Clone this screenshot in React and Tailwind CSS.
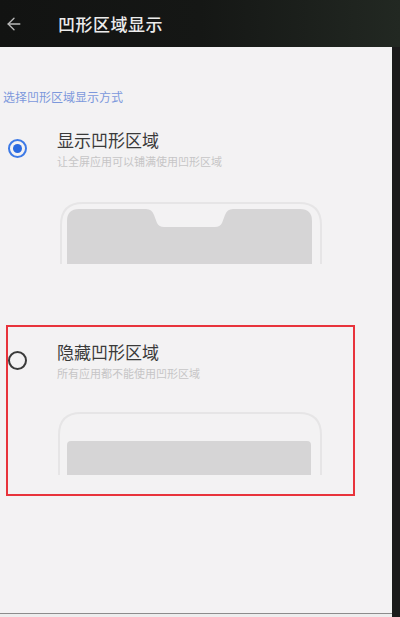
import { ArrowLeft } from "lucide-react";

// Small phone outline with a notch cut into the screen
function NotchPhone() {
  return (
    <svg width="262" height="62" viewBox="0 0 262 62" className="block">
      <path d="M1,62 L1,23 Q1,1 23,1 L239,1 Q261,1 261,23 L261,62" fill="none" stroke="#e6e5e6" strokeWidth="2" />
      <path
        d="M7,19 Q7,7 19,7 L86,7 Q92,7 94,13 L97,21 Q99,25 104,25 L155,25 Q160,25 162,21 L165,13 Q167,7 173,7 L240,7 Q252,7 252,19 L252,62 L7,62 Z"
        fill="#d6d5d6"
      />
    </svg>
  );
}

// Phone outline where the notch strip is blacked out (shown as a plain bar)
function FlatPhone() {
  return (
    <svg width="264" height="63" viewBox="0 0 264 63" className="block">
      <path d="M1,63 L1,23 Q1,1 23,1 L241,1 Q263,1 263,23 L263,63" fill="none" stroke="#e6e5e6" strokeWidth="2" />
      <path d="M9,33 Q9,29 13,29 L249,29 Q253,29 253,33 L253,63 L9,63 Z" fill="#d6d5d6" />
    </svg>
  );
}

function Radio({ checked }) {
  if (checked) {
    return (
      <div className="w-[19px] h-[19px] rounded-full border-2 border-[#3d7ae6] flex items-center justify-center">
        <div className="w-[9px] h-[9px] rounded-full bg-[#2a6ae0]" />
      </div>
    );
  }
  return <div className="w-[19px] h-[19px] rounded-full border-2 border-[#3a3a3a]" />;
}

function Option({ checked, title, desc, children }) {
  return (
    <div className="flex">
      <div className="w-[57px] pl-[8px] pt-[10px] shrink-0">
        <Radio checked={checked} />
      </div>
      <div className="flex flex-col">
        <div className="text-[17px] leading-[22px] text-[#3a3a3a]">{title}</div>
        <div className="mt-[3px] text-[11px] leading-[14px] text-[#c6c5c6]">{desc}</div>
        {children}
      </div>
    </div>
  );
}

export default function App() {
  return (
    <div
      className="w-[400px] h-[617px] bg-[#151615] flex flex-col overflow-hidden"
      style={{ fontFamily: '"Noto Sans CJK SC", "Noto Sans", sans-serif' }}
    >
      <header className="h-[47px] shrink-0 flex items-center bg-gradient-to-r from-[#121312] via-[#151715] to-[#222822]">
        <ArrowLeft size={20} strokeWidth={1.6} className="ml-[4px] text-[#b9b9b9]" />
        <span className="ml-[34px] text-[17px] font-medium tracking-[0.5px] text-[#ececec]">凹形区域显示</span>
      </header>

      <div className="flex flex-1">
        <div className="w-[392px] flex flex-col">
          <main className="flex-1 bg-[#f3f2f3] flex flex-col">
            <div className="mt-[42px] pl-[3px] text-[12px] leading-[16px] text-[#7c98dc]">选择凹形区域显示方式</div>

            <div className="mt-[24px]">
              <Option checked title="显示凹形区域" desc="让全屏应用可以铺满使用凹形区域">
                <div className="mt-[34px] ml-[3px]">
                  <NotchPhone />
                </div>
              </Option>
            </div>

            <div className="relative mt-[77px]">
              <Option title="隐藏凹形区域" desc="所有应用都不能使用凹形区域">
                <div className="mt-[32px] ml-[1px]">
                  <FlatPhone />
                </div>
              </Option>
              <div className="absolute left-[6px] top-[-16px] w-[349px] h-[171px] border-2 border-[#e8333b] pointer-events-none" />
            </div>
          </main>
          <div className="h-[1px] bg-[#8c8c8c]" />
          <div className="h-[3px] bg-[#ededed]" />
        </div>
        <div className="flex-1 bg-[#1b1b1b]" />
      </div>
    </div>
  );
}
